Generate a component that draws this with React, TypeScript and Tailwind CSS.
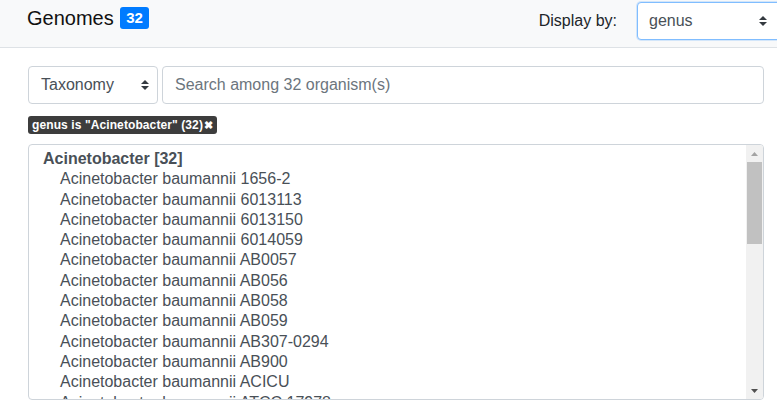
const strains = [
  '1656-2',
  '6013113',
  '6013150',
  '6014059',
  'AB0057',
  'AB056',
  'AB058',
  'AB059',
  'AB307-0294',
  'AB900',
  'ACICU',
  'ATCC 17978',
];

const SortArrows = () => (
  <svg width="8" height="10" viewBox="0 0 8 10" className="shrink-0">
    <path d="M4 0 L8 4 L0 4 Z" fill="#343a40" />
    <path d="M0 6 L8 6 L4 10 Z" fill="#343a40" />
  </svg>
);

const App = () => {
  return (
    <div className="w-[777px] h-[404px] overflow-hidden bg-white font-['Liberation_Sans',Arial,sans-serif]">
      {/* Header bar */}
      <div className="h-[48px] bg-[#f8f9fa] border-b border-[#dee2e6] flex items-start justify-between pl-[27px]">
        <div className="flex items-center gap-[6px] pt-[6px]">
          <span className="text-[20px] leading-[24px] text-[#111]">Genomes</span>
          <span className="bg-[#007bff] text-white font-bold text-[15px] leading-[22px] px-[6.5px] rounded-[3px]">
            32
          </span>
        </div>
        <div className="flex items-center gap-[20px] pt-[2px]">
          <span className="text-[16px] text-[#212529]">Display by:</span>
          <div className="w-[150px] h-[38px] bg-white border border-[#80bdff] rounded-[4px] shadow-[0_0_0_1px_rgba(0,123,255,0.15)] flex items-center justify-between pl-[11px] pr-[19px] -mr-[10px]">
            <span className="text-[16px] text-[#495057]">genus</span>
            <SortArrows />
          </div>
        </div>
      </div>

      <div className="pl-[28px] pr-[13px] pt-[18px]">
        {/* Search row */}
        <div className="flex gap-[4px]">
          <div className="w-[130px] h-[38px] border border-[#ced4da] rounded-[4px] flex items-center justify-between pl-[12px] pr-[8px]">
            <span className="text-[16px] text-[#495057]">Taxonomy</span>
            <SortArrows />
          </div>
          <div className="flex-1 h-[38px] border border-[#ced4da] rounded-[4px] flex items-center pl-[12px]">
            <span className="text-[16px] text-[#6c757d]">Search among 32 organism(s)</span>
          </div>
        </div>

        {/* Active filter tag */}
        <div className="mt-[12px] flex">
          <span className="bg-[#3d3d3d] text-white font-bold text-[12px] leading-[18px] pl-[4px] pr-[4px] rounded-[3px] flex items-center tracking-[0.1px]">
            genus is "Acinetobacter" (32)
            <span className="text-[11px] leading-[18px] ml-[1px]">✖</span>
          </span>
        </div>

        {/* Organism list */}
        <div className="mt-[10px] h-[256px] border border-[#ced4da] rounded-[4px] flex overflow-hidden">
          <div className="flex-1 pl-[14px] pt-[4px] text-[16px] leading-[20.3px] text-[#495057]">
            <div className="font-bold">Acinetobacter [32]</div>
            {strains.map((s) => (
              <div key={s} className="pl-[17px] whitespace-nowrap">
                Acinetobacter baumannii {s}
              </div>
            ))}
          </div>
          <div className="w-[17px] bg-[#f1f1f1] flex flex-col items-center">
            <div className="h-[17px] flex items-center justify-center">
              <svg width="7" height="4" viewBox="0 0 7 4">
                <path d="M3.5 0 L7 4 L0 4 Z" fill="#a3a3a3" />
              </svg>
            </div>
            <div className="w-[15px] h-[82px] bg-[#c1c1c1]" />
            <div className="flex-1" />
            <div className="h-[17px] flex items-center justify-center">
              <svg width="7" height="4" viewBox="0 0 7 4">
                <path d="M0 0 L7 0 L3.5 4 Z" fill="#505050" />
              </svg>
            </div>
          </div>
        </div>
      </div>
    </div>
  );
};

export default App;
